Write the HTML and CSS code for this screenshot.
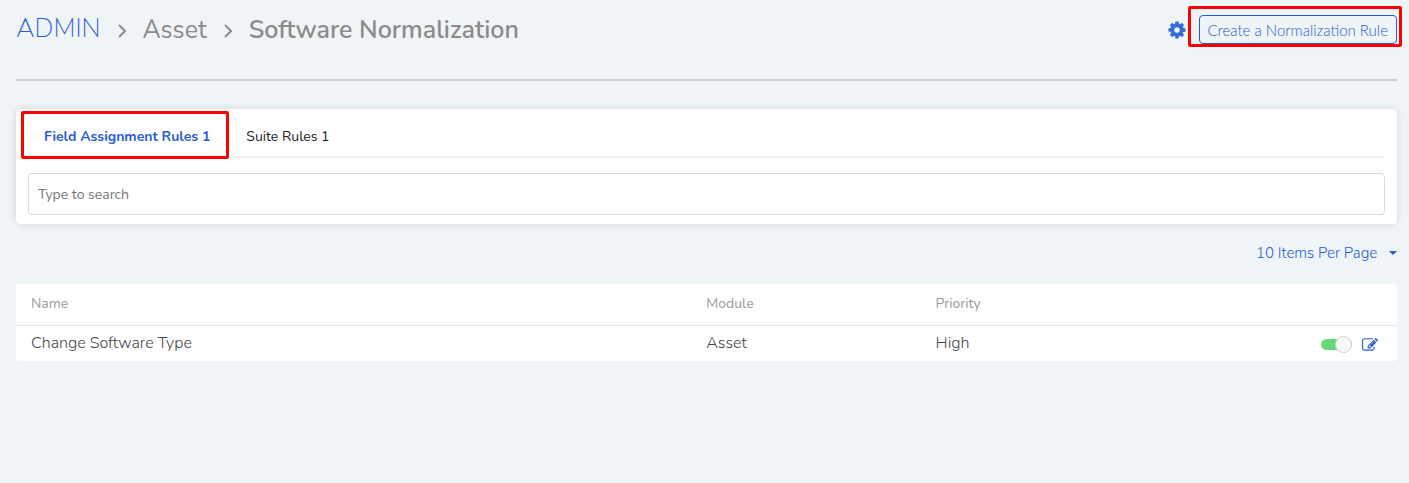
FILE: index.html
```html
<!DOCTYPE html>
<html lang="en">
	<head>
		<meta charset="UTF-8">
		<title>Software Normalization</title>
		<link rel="stylesheet" href="styles.css">
	</head>
	<body>
		<header class="page-header">
			<nav class="breadcrumb" aria-label="Breadcrumb">
				<a class="crumb-root" href="#">ADMIN</a>
				<svg class="chevron" viewBox="0 0 10 16"><path d="M2 3l6 6-6 6" /></svg>
				<a class="crumb" href="#">Asset</a>
				<svg class="chevron" viewBox="0 0 10 16"><path d="M2 3l6 6-6 6" /></svg>
				<h1 class="crumb-current">Software Normalization</h1>
			</nav>
			<div class="actions">
				<button class="icon-btn" type="button" aria-label="Settings">
					<svg class="gear" viewBox="0 0 1792 1792"><path d="M1152 896q0-106-75-181t-181-75-181 75-75 181 75 181 181 75 181-75 75-181zm512-109v222q0 12-8 23t-20 13l-185 28q-19 54-39 91 35 50 107 138 10 12 10 25t-9 23q-27 37-99 108t-94 71q-12 0-26-9l-138-108q-44 23-91 38-16 136-29 186-7 28-36 28h-222q-14 0-24.5-8.5t-11.5-21.5l-28-184q-49-16-90-37l-141 107q-10 9-25 9-14 0-25-11-126-114-165-168-7-10-7-23 0-12 8-23 15-21 51-66.5t54-70.5q-27-50-41-99l-183-27q-13-2-21-12.5t-8-23.5v-222q0-12 8-23t19-13l186-28q14-46 39-92-40-57-107-138-10-12-10-24 0-10 9-23 26-36 98.5-107.5t94.5-71.5q13 0 26 10l138 107q44-23 91-38 16-136 29-186 7-28 36-28h222q14 0 24.5 8.5t11.5 21.5l28 184q49 16 90 37l142-107q9-9 24-9 13 0 25 10 129 119 165 170 7 8 7 22 0 12-8 23-15 21-51 66.5t-54 70.5q26 50 41 98l183 28q13 2 21 12.5t8 23.5z" /></svg>
				</button>
				<div class="marked marked-action">
					<button class="create-btn" type="button">Create a Normalization Rule</button>
				</div>
			</div>
		</header>

		<main>
			<section class="card">
				<div class="tabs" role="tablist">
					<div class="marked marked-tab">
						<button class="tab active" type="button" role="tab" aria-selected="true">Field Assignment Rules 1</button>
					</div>
					<button class="tab" type="button" role="tab" aria-selected="false">Suite Rules 1</button>
				</div>
				<input class="search" type="text" placeholder="Type to search" aria-label="Type to search">
			</section>

			<div class="paging">
				<select class="per-page" aria-label="Items per page">
					<option>10 Items Per Page</option>
				</select>
				<svg class="caret" viewBox="0 0 8 4"><path d="M0 0h8l-4 4z" /></svg>
			</div>

			<table class="rules">
				<thead>
					<tr>
						<th class="col-name">Name</th>
						<th class="col-mid">Module</th>
						<th class="col-mid">Priority</th>
						<th></th>
					</tr>
				</thead>
				<tbody>
					<tr>
						<td>Change Software Type</td>
						<td>Asset</td>
						<td>High</td>
						<td>
							<div class="row-actions">
								<input class="toggle" type="checkbox" aria-label="Enabled" checked>
								<button class="icon-btn" type="button" aria-label="Edit">
									<svg class="edit" viewBox="0 0 1792 1792"><path d="M888 1184l116-116-152-152-116 116v56h96v96h56zm440-720q-16-16-33 1l-350 350q-17 17-1 33t33-1l350-350q17-17 1-33zm80 594v190q0 119-84.5 203.5t-203.5 84.5h-832q-119 0-203.5-84.5t-84.5-203.5v-832q0-119 84.5-203.5t203.5-84.5h832q63 0 117 25 15 7 18 23 3 17-9 29l-49 49q-14 14-32 8-23-6-45-6h-832q-66 0-113 47t-47 113v832q0 66 47 113t113 47h832q66 0 113-47t47-113v-126q0-13 9-22l64-64q15-15 35-7t20 29zm-96-738l288 288-672 672h-288v-288zm444 132l-92 92-288-288 92-92q28-28 68-28t68 28l152 152q28 28 28 68t-28 68z" /></svg>
								</button>
							</div>
						</td>
					</tr>
				</tbody>
			</table>
		</main>
	</body>
</html>
```
FILE: styles.css
```css
:root { --blue: #2a5bd0; --bg: #eff4f7; --grey: #8a8a8a; --red: #ff0000; }
* { box-sizing: border-box; }
body { margin: 0; padding: 0 12px 0 16px; background: var(--bg); color: #444; font-family: Nunito, 'Open Sans', sans-serif; font-size: 16px; }
button, input, select { font-family: inherit; }
button { margin: 0; padding: 0; border: 0; background: none; cursor: pointer; }
svg { display: block; }

/* header */
.page-header { display: flex; justify-content: space-between; align-items: center; height: 81px; padding-bottom: 20px; border-bottom: 2px solid #c8ccd0; }
.breadcrumb { display: flex; align-items: center; gap: 16px; font-size: 25px; line-height: 32px; }
.crumb-root { padding-bottom: 2px; color: var(--blue); font-size: 26px; font-weight: 200; text-decoration: none; }
.crumb { color: var(--grey); text-decoration: none; }
.crumb-current { margin: 0; color: var(--grey); font-size: 25px; font-weight: 600; }
.chevron { width: 10px; height: 16px; fill: none; stroke: var(--grey); stroke-width: 2; }
.actions { display: flex; align-items: center; gap: 12px; }
.gear { width: 20px; height: 20px; fill: #356bd8; }
.create-btn { height: 29px; padding: 0 8px; border: 1px solid var(--blue); border-radius: 4px; color: var(--blue); font-family: Lato, sans-serif; font-size: 15px; font-weight: 300; }

/* red frames */
.marked { position: relative; }
.marked::after { content: ''; position: absolute; border: 3px solid var(--red); border-radius: 2px; pointer-events: none; }
.marked-action::after { inset: -9px -5px -3px -11px; }
.marked-tab::after { inset: -4px -3px -3px -7px; }

/* tabs and search */
.card { margin-top: 28px; padding: 6px 12px 9px; background: #fff; border-radius: 4px; box-shadow: 0 0 8px rgba(0, 0, 0, .12); }
.tabs { display: flex; gap: 4px; margin-bottom: 15px; border-bottom: 2px solid var(--bg); }
.tab { height: 41px; padding: 2px 16px 0; color: #222; font-size: 14px; }
.tab.active { color: var(--blue); font-weight: 700; }
.search { display: block; width: 100%; height: 42px; padding: 0 9px; border: 1px solid #d9d9d9; border-radius: 4px; background: #fff; font-size: 14px; }
.search::placeholder { color: #757575; opacity: 1; }

/* page size */
.paging { display: flex; justify-content: flex-end; align-items: center; gap: 11px; height: 60px; padding-bottom: 2px; }
.per-page { appearance: none; padding: 0; border: 0; background: none; color: var(--blue); font-size: 15px; font-weight: 300; }
.caret { width: 8px; height: 4px; fill: var(--blue); }

/* rules table */
.rules { width: 100%; border-spacing: 0; table-layout: fixed; background: #fff; border-radius: 4px; }
.rules th { height: 42px; padding: 0 15px 2px; border-bottom: 1px solid #e6e6e6; color: #9a9a9a; font-size: 14px; font-weight: 400; text-align: left; }
.rules td { height: 35px; padding: 0 15px 1px; font-size: 16px; font-weight: 300; }
.col-name { width: 48.9%; }
.col-mid { width: 16.6%; }
.row-actions { display: flex; justify-content: flex-end; align-items: center; gap: 10px; padding: 3px 4px 0 0; }
.edit { width: 16px; height: 16px; fill: var(--blue); }
.toggle { appearance: none; display: flex; align-items: center; justify-content: flex-end; width: 31px; height: 11px; margin: 0; border-radius: 6px; background: #69d87b; cursor: pointer; }
.toggle::before { content: ''; width: 15px; height: 15px; flex: none; border: 1px solid #cfd2da; border-radius: 50%; background: #f8f8f8; }
.toggle:not(:checked) { justify-content: flex-start; background: #ccc; }
```
